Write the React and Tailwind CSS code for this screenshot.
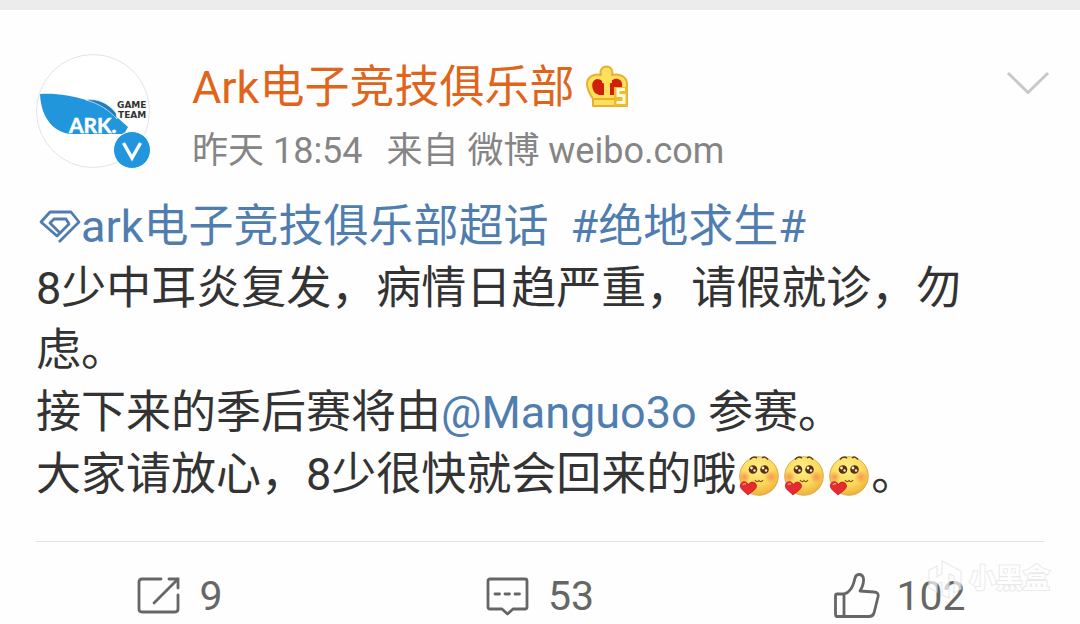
import React from "react";

const Avatar = () => (
  <svg viewBox="0 0 114 114" className="w-[114px] h-[114px]" role="img" aria-label="ARK Game Team">
    <circle cx="57" cy="57" r="56.5" fill="#fff" stroke="#e4e4e4" />
    <path
      d="M4 40 C20 39 37 42 50 46 C63 49 74 57 83 65 L92 73 L88 80 H35 C19 79 5 65 4 40 Z"
      fill="#2296dc"
    />
    <path d="M50 46 C62 44 73 50 80 59 L81 65 C73 56 64 50 50 46 Z" fill="#1b7fbd" stroke="#fff" strokeWidth="0.6" />
    <text x="33" y="79" fontSize="21" fontWeight="700" fill="#fff" stroke="#fff" strokeWidth="0.5" fontFamily="Lato, sans-serif">ARK.</text>
    <g fontSize="9" fontWeight="700" fill="#333" fontFamily="DejaVu Sans, sans-serif">
      <text x="81" y="54">GAME</text>
      <text x="82" y="64">TEAM</text>
    </g>
  </svg>
);

const VerifiedBadge = () => (
  <svg viewBox="0 0 38 38" className="absolute -right-px -bottom-px w-[38px] h-[38px]" aria-hidden="true">
    <circle cx="19" cy="19" r="18.5" fill="#2296dc" stroke="#fff" strokeWidth="1" />
    <path d="M10.500 12 L19 27 L27.500 12" fill="none" stroke="#fff" strokeWidth="3.4" />
  </svg>
);

const Crown = () => (
  <svg viewBox="0 0 42 42" className="w-[42px] h-[42px] mb-1" aria-hidden="true">
    <path
      d="M7 41 V34 C3 28 1 23 1 19 C1 12 8 8 15 10 A6 6 0 1 1 26 10 C34 8 41 12 41 19 V41 Z"
      fill="#fde05c"
      stroke="#e8b02c"
      strokeWidth="2"
      strokeLinejoin="round"
    />
    <path d="M9 28 C5 23 5 15 11 14 C15 14 18 17 18 20 V30 H13 Z M24 30 V20 C24 16 28 13 32 14 C37 15 37 22 35 25 L30 30 Z" fill="#d0200c" />
    <path d="M21 14 V31 M16 16 H26" stroke="#fde05c" strokeWidth="4" />
    <path d="M8 34 H30" stroke="#e8b02c" strokeWidth="2" />
    <rect x="28" y="22" width="13" height="19" fill="#f0bc28" />
    <path d="M39 24.500 H32 V30.500 H38 V37.500 H30.500" fill="none" stroke="#fffbe0" strokeWidth="3" />
  </svg>
);

const Gem = () => (
  <svg viewBox="0 0 45 34" className="inline-block w-[45px] h-[34px] align-[-1px]" aria-hidden="true">
    <g fill="none" stroke="currentColor" strokeWidth="2.800" strokeLinejoin="round">
      <path d="M23 33 L43 13 L35 3 H14 L5 13 L21 27 L33 15 L30 10 H18 L14 14 L23 23" />
    </g>
  </svg>
);

const Emoji = () => (
  <svg viewBox="0 0 45 42" className="inline-block w-[45px] h-[42px] align-[-7px]" role="img" aria-label="[羞嗒嗒]">
    <defs>
      <radialGradient id="face" cx="45%" cy="30%" r="70%">
        <stop offset="0" stopColor="#fff089" />
        <stop offset="0.6" stopColor="#fbda5c" />
        <stop offset="1" stopColor="#ecb23c" />
      </radialGradient>
      <radialGradient id="blush">
        <stop offset="0" stopColor="#f9854a" stopOpacity="0.8" />
        <stop offset="1" stopColor="#f9854a" stopOpacity="0" />
      </radialGradient>
    </defs>
    <circle cx="23" cy="21" r="19.300" fill="url(#face)" stroke="#d6a03a" strokeWidth="0.8" />
    <circle cx="8.500" cy="22" r="6" fill="url(#blush)" />
    <circle cx="35" cy="22" r="6.500" fill="url(#blush)" />
    <path d="M14 4.500 Q17 0.500 21 3 M26 3 Q29 0.500 32 4.500" fill="none" stroke="#5f3b12" strokeWidth="1.500" />
    <circle cx="17" cy="14.500" r="4.300" fill="#5a300f" />
    <circle cx="28.500" cy="14.500" r="4.300" fill="#5a300f" />
    <g fill="#fff3d0">
      <circle cx="15.500" cy="13" r="1.400" />
      <circle cx="18.500" cy="15.500" r="1.200" />
      <circle cx="27" cy="13" r="1.400" />
      <circle cx="30" cy="15.500" r="1.200" />
    </g>
    <path d="M19 25 Q21 28 23 25.500 Q25 28 27 25" fill="none" stroke="#7a4a14" strokeWidth="1.200" />
    <path d="M12 40 C8 36 3.500 34 4.500 29.500 C6 25.500 10.500 26 12.500 29.500 C15 25.500 20 27 20.500 30.500 C20.500 35 15 37 12 40 Z" fill="#e62b2e" stroke="#b81b20" strokeWidth="0.8" />
    <path d="M7 30 Q8 28 10 29" fill="none" stroke="#ff9a94" strokeWidth="1.400" />
  </svg>
);

const ShareIcon = () => (
  <svg viewBox="0 0 46 46" className="w-[46px] h-[46px]" aria-hidden="true">
    <g fill="none" stroke="currentColor" strokeWidth="2.800" strokeLinecap="round">
      <path d="M24 6 H5 Q2 6 2 9 V36 Q2 39 5 39 H38 Q41 39 41 36 V22" strokeLinejoin="round" />
      <path d="M17 30 L40 7" />
      <path d="M32 6 H41 V15" />
    </g>
  </svg>
);

const CommentIcon = () => (
  <svg viewBox="0 0 46 46" className="w-[46px] h-[46px]" aria-hidden="true">
    <g fill="none" stroke="currentColor" strokeWidth="2.800" strokeLinecap="round" strokeLinejoin="round">
      <path d="M4 6 H39 Q41 6 41 8 V34 Q41 36 39 36 H27 L21.500 41 L16 36 H4 Q2 36 2 34 V8 Q2 6 4 6 Z" />
      <path d="M9 21 H13.500 M19 21 H23.500 M29 21 H33.500" />
    </g>
  </svg>
);

const LikeIcon = () => (
  <svg viewBox="0 0 46 46" className="w-[46px] h-[46px]" aria-hidden="true">
    <g fill="none" stroke="currentColor" strokeWidth="2.800" strokeLinejoin="round">
      <path d="M10 21 H3 Q1.500 21 1.500 23 V41 Q1.500 43.500 3 43.500 H35 Q39 43.500 40 40 L44 24 Q45 19 40 19 L26 18 Q30 11 29.500 6 Q29 1.500 25 1.500 Q22 1.500 21 5 Q19 14 16 17 Q14 20 10 21 Z" />
      <path d="M10 21 V43" />
    </g>
  </svg>
);

const Watermark = () => (
  <div className="absolute right-[30px] bottom-[24px] flex items-center gap-1 pointer-events-none select-none opacity-70">
    <svg viewBox="0 0 38 42" className="w-[38px] h-[42px]" aria-hidden="true">
      <path
        d="M2 12 L10 8 V19 L15 16 V3 L34 13 V31 L27 35 V18 L22 16 V40 L15 37 V24 L10 26 V34 L2 30 Z"
        fill="#fff"
        stroke="#e2e2e2"
        strokeWidth="1.200"
      />
    </svg>
    <span className="text-[27px] leading-8 font-bold text-white [-webkit-text-stroke:2px_#e2e2e2] [paint-order:stroke_fill]">
      小黑盒
    </span>
  </div>
);

const actions = [
  { label: "转发", count: 9, Icon: ShareIcon },
  { label: "评论", count: 53, Icon: CommentIcon },
  { label: "赞", count: 102, Icon: LikeIcon },
];

const App = () => {
  return (
    <main
      lang="zh-CN"
      className="relative min-h-screen bg-[#fefefe] border-t-10 border-[#ececec] font-[Roboto,'Noto_Sans_CJK_SC',sans-serif]"
    >
      <article>
        <header className="flex items-start px-9 pt-11">
          <div className="relative shrink-0 mr-[42px]">
            <Avatar />
            <VerifiedBadge />
          </div>
          <div className="flex-1">
            <div className="flex items-center gap-3 pt-1">
              <a href="#ark" className="text-[45px] leading-[60px] text-[#e0651a]">Ark电子竞技俱乐部</a>
              <Crown />
            </div>
            <p className="mt-[5px] text-[36px] leading-[56px] text-[#858585] whitespace-pre">昨天 18:54  <span className="ml-1.5">来自 微博 weibo.com</span></p>
          </div>
          <button aria-label="更多" className="mt-4 -mr-1.5 p-0">
            <svg viewBox="0 0 44 26" className="w-[44px] h-[26px]" aria-hidden="true">
              <path d="M2 3 L22 22.500 L42 3" fill="none" stroke="#c8c8c8" strokeWidth="3" />
            </svg>
          </button>
        </header>

        <div className="px-9 mt-[17px] text-[45px] leading-[62px] text-[#333]">
          <p className="text-[#507daf]">
            <a href="#topic"><Gem />ark电子竞技俱乐部超话</a>
            <a href="#pubg" className="ml-[22px]">#绝地求生#</a>
          </p>
          <p>8少中耳炎复发，病情日趋严重，请假就诊，勿虑。</p>
          <p>
            接下来的季后赛将由<a href="#manguo" className="text-[#507daf]">@Manguo3o</a> 参赛。
          </p>
          <p>
            大家请放心，8少很快就会回来的哦<Emoji /><Emoji /><Emoji />。
          </p>
        </div>

        <hr className="mx-9 mt-[35px] border-[#e2e2e2]" />

        <footer className="grid grid-cols-3 pt-7">
          {actions.map(({ label, count, Icon }) => (
            <button
              key={label}
              aria-label={label}
              className="flex items-center justify-center gap-4 text-[41px] leading-[52px] text-[#666]"
            >
              <Icon />
              <span>{count}</span>
            </button>
          ))}
        </footer>
      </article>
      <Watermark />
    </main>
  );
};

export default App;
